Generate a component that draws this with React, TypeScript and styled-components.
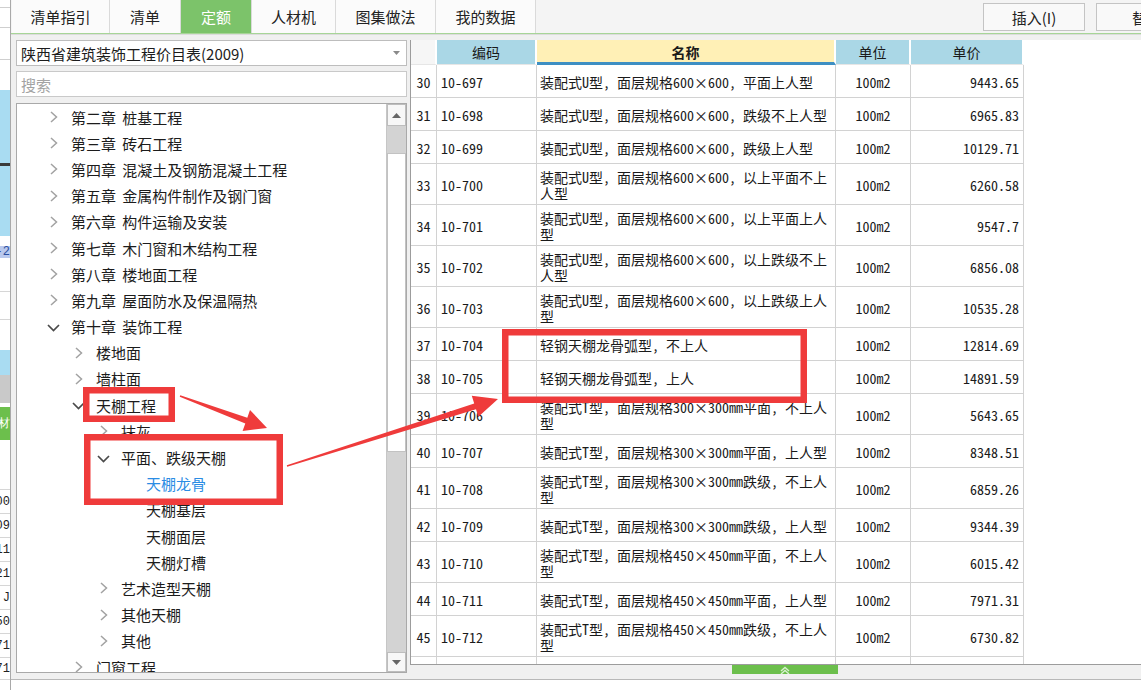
import React from 'react';
import styled, { createGlobalStyle } from 'styled-components';

const UI_FONT = `"Noto Sans CJK SC", "Noto Sans", sans-serif`;
const GRID_FONT = `"Noto Sans Mono CJK SC", "Liberation Mono", "Noto Sans CJK SC", monospace`;

const GlobalStyle = createGlobalStyle`
  html, body { margin: 0; padding: 0; background: #fff; }
  body { font-family: ${UI_FONT}; }
  * { box-sizing: border-box; }
`;

const Root = styled.div`
  position: relative;
  width: 1141px;
  height: 690px;
  overflow: hidden;
  display: flex;
  background: #fff;
`;

/* ---------- background application peeking at the left ---------- */
const BackStrip = styled.div`
  width: 10px;
  flex: none;
  display: flex;
  flex-direction: column;
  overflow: hidden;
  font-family: "Liberation Mono", monospace;
  font-size: 12px;
`;

const BackBlock = styled.div<{ $h: number; $bg: string; $line?: string; $color?: string }>`
  flex: none;
  height: ${(p) => p.$h}px;
  background: ${(p) => p.$bg};
  border-bottom: ${(p) => (p.$line ? `1px solid ${p.$line}` : 'none')};
  color: ${(p) => p.$color || '#222'};
  display: flex;
  align-items: center;
  justify-content: flex-end;
  white-space: nowrap;
  line-height: 1;
`;

/* ---------- dialog ---------- */
const Dialog = styled.div`
  flex: 1;
  min-width: 0;
  display: flex;
  flex-direction: column;
  border-left: 1px solid #a9a9a9;
  background: #f0f0f0;
`;

const TopBar = styled.div`
  height: 34px;
  flex: none;
  display: flex;
  align-items: stretch;
  background: #f4f4f4;
  border-bottom: 1px solid #a7d597;
  padding-left: 1px;
`;

const Tab = styled.div<{ $w: number; $active?: boolean }>`
  width: ${(p) => p.$w}px;
  flex: none;
  display: flex;
  align-items: center;
  justify-content: center;
  font-size: 15px;
  color: ${(p) => (p.$active ? '#fff' : '#222')};
  background: ${(p) => (p.$active ? '#7cc36a' : '#fbfbfb')};
  border-right: 1px solid #dadada;
`;

const ToolGroup = styled.div`
  margin-left: auto;
  margin-right: -57px;
  display: flex;
  align-items: flex-start;
  gap: 11px;
  padding-top: 3px;
`;

const ToolButton = styled.div`
  width: 102px;
  height: 28px;
  flex: none;
  display: flex;
  align-items: center;
  justify-content: center;
  font-size: 15px;
  color: #222;
  background: #f9f9f9;
  border: 1px solid #c4c4c4;
`;

const Body = styled.div`
  flex: 1;
  min-height: 0;
  display: flex;
  border-top: 1px solid #dcdcdc;
`;

/* ---------- left panel ---------- */
const LeftPanel = styled.div`
  width: 399px;
  flex: none;
  display: flex;
  flex-direction: column;
  gap: 5px;
  padding: 5px 3px 6px 5px;
`;

const SelectBox = styled.div`
  height: 26px;
  flex: none;
  display: flex;
  align-items: center;
  justify-content: space-between;
  padding: 0 6px 0 4px;
  background: #fff;
  border: 1px solid #bdbdbd;
  font-size: 15px;
  color: #1c1c1c;
`;

const SearchBox = styled.div`
  height: 26px;
  flex: none;
  display: flex;
  align-items: center;
  padding: 0 4px;
  background: #fff;
  border: 1px solid #c9c9c9;
  font-size: 15px;
  color: #a3a3a3;
  margin-bottom: 1px;
`;

const TreeBox = styled.div`
  flex: 1;
  min-height: 0;
  display: flex;
  background: #fff;
  border: 1px solid #a9a9a9;
`;

const TreeList = styled.div`
  flex: 1;
  min-width: 0;
  overflow: hidden;
`;

const TreeRow = styled.div<{ $level: number; $selected?: boolean }>`
  height: 26.2px;
  display: flex;
  align-items: center;
  padding-left: ${(p) => 32 + (p.$level - 1) * 25}px;
  font-size: 15px;
  white-space: nowrap;
  color: ${(p) => (p.$selected ? '#2a8ce4' : '#1c1c1c')};
  word-spacing: 3px;
`;

const ChevronSlot = styled.div`
  width: 22px;
  flex: none;
  display: flex;
  align-items: center;
  svg { margin-left: -2px; overflow: visible; }
`;

const Scrollbar = styled.div`
  width: 20px;
  flex: none;
  display: flex;
  flex-direction: column;
  background: #d3d3d3;
  border-left: 1px solid #c6c6c6;
`;

const ScrollButton = styled.div<{ $h: number }>`
  height: ${(p) => p.$h}px;
  flex: none;
  display: flex;
  align-items: center;
  justify-content: center;
  background: #f7f7f7;
  border: 1px solid #bdbdbd;
`;

const ScrollGap = styled.div<{ $h?: number }>`
  flex: ${(p) => (p.$h ? 'none' : '1')};
  height: ${(p) => (p.$h ? `${p.$h}px` : 'auto')};
`;

const ScrollThumb = styled.div`
  height: 299px;
  flex: none;
  background: #fff;
  border: 1px solid #c2c2c2;
`;

/* ---------- grid ---------- */
const GridPanel = styled.div`
  flex: 1;
  min-width: 0;
  display: flex;
  flex-direction: column;
  padding-top: 5px;
`;

const Grid = styled.div`
  flex: 1;
  min-height: 0;
  overflow: hidden;
  background: #fff;
  border-left: 1px solid #9c9c9c;
  border-bottom: 1px solid #9c9c9c;
  font-family: ${GRID_FONT};
  font-size: 14px;
  color: #1a1a1a;
`;

const COLS = '26px 100px 299px 75px 113px';

const HeadRow = styled.div`
  display: grid;
  grid-template-columns: ${COLS};
  height: 25px;
`;

const HeadCell = styled.div<{ $bg: string; $bold?: boolean; $mark?: boolean }>`
  display: flex;
  align-items: center;
  justify-content: center;
  background: ${(p) => p.$bg};
  border-right: 2px solid #fff;
  border-bottom: ${(p) => (p.$mark ? '3px solid #3e8fc3' : '1px solid #e6e6e6')};
  font-weight: ${(p) => (p.$bold ? 700 : 400)};
  padding-top: ${(p) => (p.$mark ? '2px' : '0')};
`;

const DataRow = styled.div<{ $h: number }>`
  display: grid;
  grid-template-columns: ${COLS};
  height: ${(p) => p.$h}px;
`;

const Cell = styled.div<{ $align?: 'left' | 'center' | 'right' }>`
  display: flex;
  align-items: center;
  justify-content: ${(p) =>
    p.$align === 'center' ? 'center' : p.$align === 'right' ? 'flex-end' : 'flex-start'};
  padding: 2px ${(p) => (p.$align === 'left' ? '3px' : '4px')} 0;
  border-right: 1px solid #d2d2d2;
  border-bottom: 1px solid #d2d2d2;
  line-height: 16px;
  min-width: 0;
`;

const GridFooter = styled.div`
  height: 14px;
  flex: none;
  display: flex;
  align-items: flex-start;
`;

const CollapseHandle = styled.div`
  margin-left: 322px;
  width: 106px;
  height: 9px;
  background: #6cbf4c;
  display: flex;
  justify-content: center;
  align-items: center;
`;

const BottomEdge = styled.div`
  height: 11px;
  flex: none;
  background: #fff;
  border-top: 1px solid #b8b8b8;
`;

/* ---------- annotation overlay ---------- */
const Overlay = styled.svg`
  position: absolute;
  left: 0;
  top: 0;
  width: 1141px;
  height: 690px;
  pointer-events: none;
`;

/* ---------- data ---------- */
type TreeItem = { level: number; label: string; state: 'closed' | 'open' | 'leaf'; selected?: boolean };

const treeItems: TreeItem[] = [
  { level: 1, label: '第二章 桩基工程', state: 'closed' },
  { level: 1, label: '第三章 砖石工程', state: 'closed' },
  { level: 1, label: '第四章 混凝土及钢筋混凝土工程', state: 'closed' },
  { level: 1, label: '第五章 金属构件制作及钢门窗', state: 'closed' },
  { level: 1, label: '第六章 构件运输及安装', state: 'closed' },
  { level: 1, label: '第七章 木门窗和木结构工程', state: 'closed' },
  { level: 1, label: '第八章 楼地面工程', state: 'closed' },
  { level: 1, label: '第九章 屋面防水及保温隔热', state: 'closed' },
  { level: 1, label: '第十章 装饰工程', state: 'open' },
  { level: 2, label: '楼地面', state: 'closed' },
  { level: 2, label: '墙柱面', state: 'closed' },
  { level: 2, label: '天棚工程', state: 'open' },
  { level: 3, label: '抹灰', state: 'closed' },
  { level: 3, label: '平面、跌级天棚', state: 'open' },
  { level: 4, label: '天棚龙骨', state: 'leaf', selected: true },
  { level: 4, label: '天棚基层', state: 'leaf' },
  { level: 4, label: '天棚面层', state: 'leaf' },
  { level: 4, label: '天棚灯槽', state: 'leaf' },
  { level: 3, label: '艺术造型天棚', state: 'closed' },
  { level: 3, label: '其他天棚', state: 'closed' },
  { level: 3, label: '其他', state: 'closed' },
  { level: 2, label: '门窗工程', state: 'closed' },
];

type Row = { no: number; code: string; name: string; price: string; tall?: boolean };

const U = '装配式U型, 面层规格600×600, ';
const rows: Row[] = [
  { no: 30, code: '10-697', name: U + '平面上人型', price: '9443.65' },
  { no: 31, code: '10-698', name: U + '跌级不上人型', price: '6965.83' },
  { no: 32, code: '10-699', name: U + '跌级上人型', price: '10129.71' },
  { no: 33, code: '10-700', name: U + '以上平面不上人型', price: '6260.58', tall: true },
  { no: 34, code: '10-701', name: U + '以上平面上人型', price: '9547.7', tall: true },
  { no: 35, code: '10-702', name: U + '以上跌级不上人型', price: '6856.08', tall: true },
  { no: 36, code: '10-703', name: U + '以上跌级上人型', price: '10535.28', tall: true },
  { no: 37, code: '10-704', name: '轻钢天棚龙骨弧型, 不上人', price: '12814.69' },
  { no: 38, code: '10-705', name: '轻钢天棚龙骨弧型, 上人', price: '14891.59' },
  { no: 39, code: '10-706', name: '装配式T型, 面层规格300×300mm平面, 不上人型', price: '5643.65', tall: true },
  { no: 40, code: '10-707', name: '装配式T型, 面层规格300×300mm平面, 上人型', price: '8348.51' },
  { no: 41, code: '10-708', name: '装配式T型, 面层规格300×300mm跌级, 不上人型', price: '6859.26', tall: true },
  { no: 42, code: '10-709', name: '装配式T型, 面层规格300×300mm跌级, 上人型', price: '9344.39' },
  { no: 43, code: '10-710', name: '装配式T型, 面层规格450×450mm平面, 不上人型', price: '6015.42', tall: true },
  { no: 44, code: '10-711', name: '装配式T型, 面层规格450×450mm平面, 上人型', price: '7971.31' },
  { no: 45, code: '10-712', name: '装配式T型, 面层规格450×450mm跌级, 不上人型', price: '6730.82', tall: true },
];

const tabs = [
  { label: '清单指引', w: 98 },
  { label: '清单', w: 71 },
  { label: '定额', w: 71, active: true },
  { label: '人材机', w: 84 },
  { label: '图集做法', w: 100 },
  { label: '我的数据', w: 100 },
];

const Chevron = ({ open }: { open: boolean }) =>
  open ? (
    <svg width="14" height="12" viewBox="0 0 14 12">
      <polyline points="1,4 6.5,9.5 12,4" fill="none" stroke="#4a4a4a" strokeWidth="1.7" />
    </svg>
  ) : (
    <svg width="14" height="12" viewBox="0 0 14 12">
      <polyline points="4,1 9.5,6 4,11" fill="none" stroke="#a2a2a2" strokeWidth="1.5" />
    </svg>
  );

const RED = '#ef3b3b';

export default function App() {
  return (
    <Root>
      <GlobalStyle />
      <BackStrip>
        <BackBlock $h={8} $bg="#fff" $line="#cfcfcf" />
        <BackBlock $h={20} $bg="#fff" $line="#cfcfcf" />
        <BackBlock $h={32} $bg="#fff" $line="#cfcfcf" />
        <BackBlock $h={30} $bg="#fff" />
        <BackBlock $h={73} $bg="#a9dcf2" />
        <BackBlock $h={3} $bg="#3a3a3a" />
        <BackBlock $h={70} $bg="#a9dcf2" />
        <BackBlock $h={32} $bg="#fff" $color="#2a4fa0">
          <span style={{ background: '#b9c9ee' }}>-2</span>
        </BackBlock>
        <BackBlock $h={24} $bg="#fff" $line="#d6d6d6" />
        <BackBlock $h={28} $bg="#fff" $line="#d6d6d6" />
        <BackBlock $h={30} $bg="#fff" />
        <BackBlock $h={25} $bg="#a9dcf2" />
        <BackBlock $h={28} $bg="#c9c9c9" />
        <BackBlock $h={4} $bg="#fff" />
        <BackBlock $h={33} $bg="#6cbf4c" $color="#fff">材</BackBlock>
        <BackBlock $h={50} $bg="#fff" $line="#d6d6d6" />
        {['100', '109', '111', '121', ' J', '150', 'F71', 'F71'].map((t, i) => (
          <BackBlock key={i} $h={i === 7 ? 22 : 24} $bg="#fff" $line="#d6d6d6">
            {t}
          </BackBlock>
        ))}
        <BackBlock $h={10} $bg="#fff" />
      </BackStrip>

      <Dialog>
        <TopBar>
          {tabs.map((t) => (
            <Tab key={t.label} $w={t.w} $active={t.active}>
              {t.label}
            </Tab>
          ))}
          <ToolGroup>
            <ToolButton>插入(I)</ToolButton>
            <ToolButton>替换</ToolButton>
          </ToolGroup>
        </TopBar>

        <Body>
          <LeftPanel>
            <SelectBox>
              <span>陕西省建筑装饰工程价目表(2009)</span>
              <svg width="7" height="4" viewBox="0 0 7 4">
                <polygon points="0,0 7,0 3.5,4" fill="#8a8a8a" />
              </svg>
            </SelectBox>
            <SearchBox>搜索</SearchBox>
            <TreeBox>
              <TreeList>
                {treeItems.map((it, i) => (
                  <TreeRow key={i} $level={it.level} $selected={it.selected}>
                    <ChevronSlot>{it.state !== 'leaf' && <Chevron open={it.state === 'open'} />}</ChevronSlot>
                    {it.label}
                  </TreeRow>
                ))}
              </TreeList>
              <Scrollbar>
                <ScrollButton $h={22}>
                  <svg width="9" height="5" viewBox="0 0 9 5">
                    <polygon points="0,5 9,5 4.5,0" fill="#666" />
                  </svg>
                </ScrollButton>
                <ScrollGap $h={27} />
                <ScrollThumb />
                <ScrollGap />
                <ScrollButton $h={20}>
                  <svg width="9" height="5" viewBox="0 0 9 5">
                    <polygon points="0,0 9,0 4.5,5" fill="#666" />
                  </svg>
                </ScrollButton>
              </Scrollbar>
            </TreeBox>
          </LeftPanel>

          <GridPanel>
            <Grid>
              <HeadRow>
                <HeadCell $bg="#f6f6f6" />
                <HeadCell $bg="#aad7e6">编码</HeadCell>
                <HeadCell $bg="#fff0b6" $bold $mark>
                  名称
                </HeadCell>
                <HeadCell $bg="#aad7e6">单位</HeadCell>
                <HeadCell $bg="#aad7e6">单价</HeadCell>
              </HeadRow>
              {rows.map((r) => (
                <DataRow key={r.no} $h={r.tall ? 41 : 33}>
                  <Cell $align="center">{r.no}</Cell>
                  <Cell>{r.code}</Cell>
                  <Cell $align="left">{r.name}</Cell>
                  <Cell $align="center">100m2</Cell>
                  <Cell $align="right">{r.price}</Cell>
                </DataRow>
              ))}
              <DataRow $h={33}>
                <Cell />
                <Cell />
                <Cell />
                <Cell />
                <Cell />
              </DataRow>
            </Grid>
            <GridFooter>
              <CollapseHandle>
                <svg width="12" height="8" viewBox="0 0 12 8">
                  <polyline points="2,5 6,1.5 10,5" fill="none" stroke="#d8f0cf" strokeWidth="1.4" />
                  <polyline points="2,8 6,4.5 10,8" fill="none" stroke="#d8f0cf" strokeWidth="1.4" />
                </svg>
              </CollapseHandle>
            </GridFooter>
          </GridPanel>
        </Body>
        <BottomEdge />
      </Dialog>

      <Overlay viewBox="0 0 1141 690">
        <rect x="86.25" y="390.25" width="85.5" height="28.5" fill="none" stroke={RED} strokeWidth="6.5" />
        <rect x="87.25" y="437.25" width="192.5" height="64.5" fill="none" stroke={RED} strokeWidth="6.5" />
        <rect x="505.25" y="332.25" width="298.5" height="67.5" fill="none" stroke={RED} strokeWidth="6.5" />
        <polygon
          points="180.25,395.3 247.3,417.8 250,410 267,428 242.6,431 245.3,423.4 179.75,396.7"
          fill={RED}
        />
        <polygon
          points="286.8,465.3 474.2,403.4 471.8,395.8 498,399 478.4,416.8 476,409.2 287.2,466.7"
          fill={RED}
        />
      </Overlay>
    </Root>
  );
}
